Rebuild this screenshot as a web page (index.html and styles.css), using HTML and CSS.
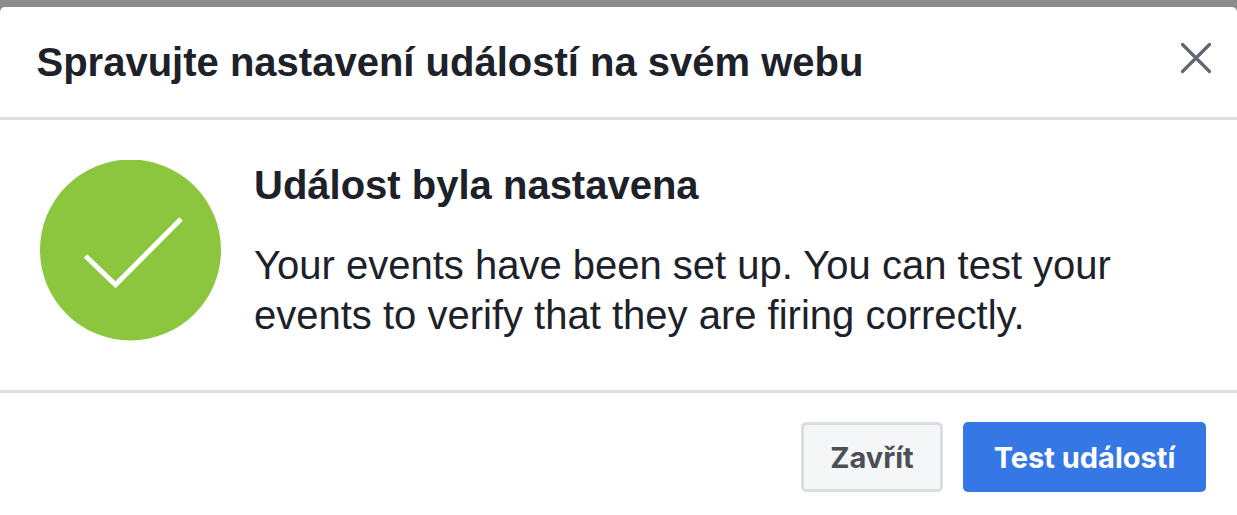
FILE: index.html
```html
<!DOCTYPE html>
<html lang="cs">
<head>
<meta charset="utf-8">
<title>Spravujte nastavení událostí</title>
<link rel="stylesheet" href="styles.css">
</head>
<body>
<div class="dialog">
  <header class="head">
    <h1 class="title">Spravujte nastavení událostí na svém webu</h1>
    <svg class="close" viewBox="0 0 32 32" width="32" height="32" aria-label="Zavřít"><path d="M2.500 2.500L29.500 29.500M29.500 2.500L2.500 29.500" fill="none" stroke="#606770" stroke-width="3.2" stroke-linecap="round"/></svg>
  </header>
  <section class="body">
    <svg class="status" viewBox="0 0 181 181" width="181" height="181"><circle cx="90.500" cy="90" r="90.500" fill="#8cc63f"/><path d="M45.500 96L75.500 124.800L141 59" fill="none" stroke="#fff" stroke-width="5"/></svg>
    <div class="copy">
      <h2 class="heading">Událost byla nastavena</h2>
      <p class="text">Your events have been set up. You can test your events to verify that they are firing correctly.</p>
    </div>
  </section>
  <footer class="foot">
    <button class="btn btn-light">Zavřít</button>
    <button class="btn btn-primary">Test událostí</button>
  </footer>
</div>
</body>
</html>
```
FILE: styles.css
```css
* { box-sizing: border-box; }
html, body { margin: 0; height: 100%; }
body {
  background: #8a8b8a;
  padding-top: 7px;
  overflow: hidden;
  font-family: "Liberation Sans", Arial, sans-serif;
  color: #1d2129;
}
.dialog {
  background: #fff;
  height: 508px;
  border-radius: 5px 5px 0 0;
}
.head {
  height: 113px;
  border-bottom: 3px solid #dadde1;
  display: flex;
  align-items: center;
  justify-content: space-between;
  padding: 0 25px 0 36.5px;
}
.title {
  margin: 0;
  font-size: 40px;
  font-weight: 700;
  line-height: 46px;
}
.close { display: block; margin-bottom: 9px; }
.body {
  height: 273px;
  border-bottom: 3px solid #dadde1;
  display: flex;
  align-items: flex-start;
  padding: 40px 0 0 39.5px;
}
.status { flex: none; display: block; }
.copy { margin-left: 33.5px; width: 880px; }
.heading {
  margin: 0;
  font-size: 40px;
  font-weight: 700;
  line-height: 50px;
}
.text {
  margin: 30px 0 0;
  font-size: 40px;
  line-height: 50px;
}
.foot {
  display: flex;
  justify-content: flex-end;
  gap: 20px;
  padding: 29px 31px 0 0;
}
.btn {
  height: 70px;
  border-radius: 5px;
  font-family: Inter, "Liberation Sans", sans-serif;
  font-size: 29px;
  font-weight: 700;
}
.btn-light {
  width: 142px;
  background: #f5f6f7;
  border: 3px solid #dadde1;
  color: #4b4f56;
}
.btn-primary {
  width: 243px;
  background: #3578e5;
  border: 0;
  color: #fff;
}
```
